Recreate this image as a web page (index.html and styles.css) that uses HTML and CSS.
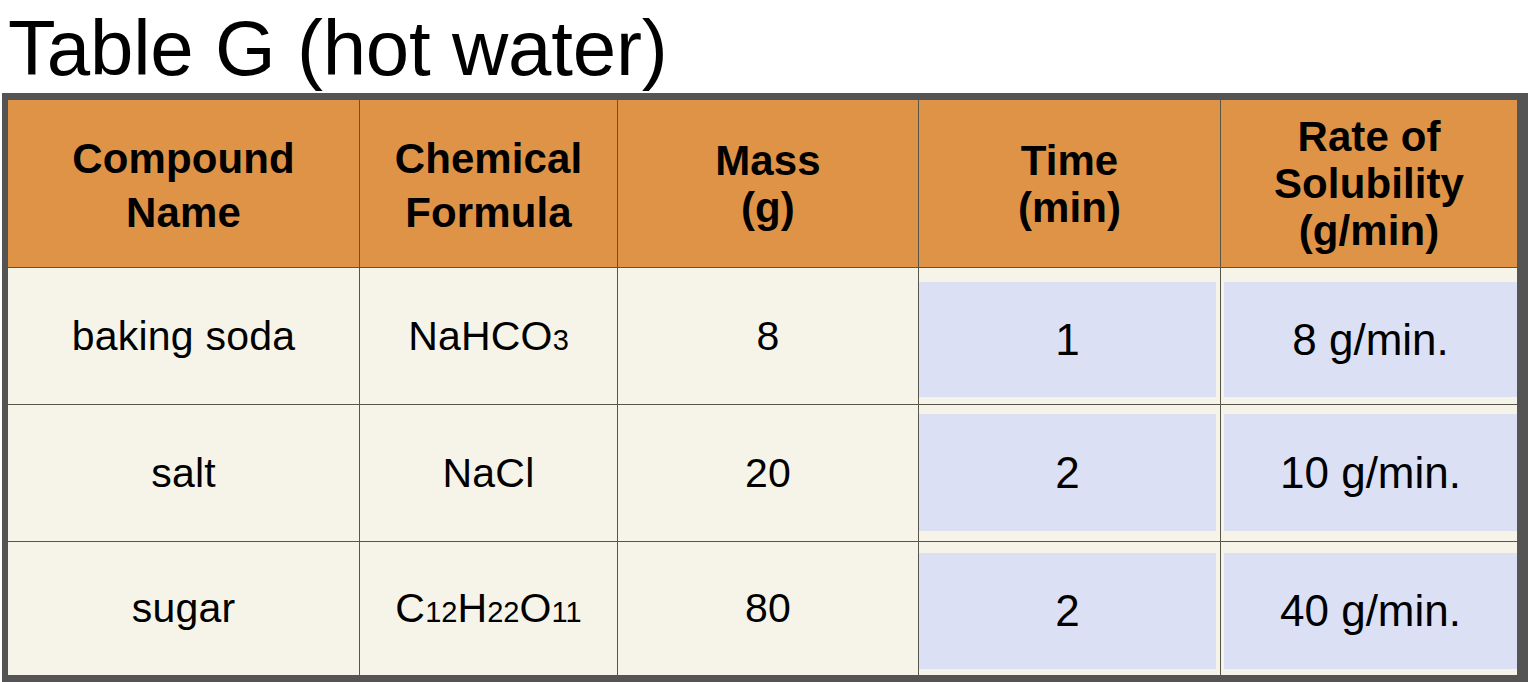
FILE: index.html
```html
<!DOCTYPE html>
<html lang="en">
<head>
<meta charset="utf-8">
<title>Table G (hot water)</title>
<link rel="stylesheet" href="styles.css">
</head>
<body>
<h1 class="title">Table G (hot water)</h1>
<div class="table">
  <div class="grid">
    <div class="cell head lh-wide">Compound<br>Name</div>
    <div class="cell head lh-wide">Chemical<br>Formula</div>
    <div class="cell head">Mass<br>(g)</div>
    <div class="cell head">Time<br>(min)</div>
    <div class="cell head">Rate of<br>Solubility<br>(g/min)</div>

    <div class="cell body">baking soda</div>
    <div class="cell body">NaHCO<span class="sub">3</span></div>
    <div class="cell body">8</div>
    <div class="cell blue-wrap time r1"><div class="blue">1</div></div>
    <div class="cell blue-wrap rate r1"><div class="blue">8 g/min.</div></div>

    <div class="cell body">salt</div>
    <div class="cell body">NaCl</div>
    <div class="cell body">20</div>
    <div class="cell blue-wrap time r2"><div class="blue">2</div></div>
    <div class="cell blue-wrap rate r2"><div class="blue">10 g/min.</div></div>

    <div class="cell body">sugar</div>
    <div class="cell body">C<span class="sub">12</span>H<span class="sub">22</span>O<span class="sub">11</span></div>
    <div class="cell body">80</div>
    <div class="cell blue-wrap time r3"><div class="blue">2</div></div>
    <div class="cell blue-wrap rate r3"><div class="blue">40 g/min.</div></div>
  </div>
</div>
</body>
</html>
```
FILE: styles.css
```css
html, body {
  margin: 0;
  padding: 0;
  background: #ffffff;
}

body {
  font-family: "Liberation Sans", Arial, Helvetica, sans-serif;
  color: #000;
}

.title {
  margin: 0;
  padding: 3px 0 0 8px;
  height: 90px;
  font-size: 78px;
  line-height: 90px;
  font-weight: normal;
  letter-spacing: -0.2px;
  color: #000;
}

.table {
  margin-left: 2px;
  border-style: solid;
  border-color: #545454;
  border-width: 7px 11px 7px 6px;
  background: #5a5549;
}

.grid {
  display: grid;
  grid-template-columns: 351px 257px 300px 301px 296px;
  grid-template-rows: 167px 136px 136px 133px;
  gap: 1px;
  background: #5a5549;
}

.cell {
  display: flex;
  align-items: center;
  justify-content: center;
  text-align: center;
  background: #f6f4e8;
}

.head {
  background: #df9347;
  font-weight: bold;
  font-size: 42px;
  line-height: 47px;
  letter-spacing: 0.1px;
}

.head.lh-wide {
  line-height: 54px;
  padding-top: 4px;
}

.body {
  font-size: 41px;
  letter-spacing: 0.2px;
}

.sub {
  font-size: 29px;
  position: relative;
  top: 4px;
  letter-spacing: 0;
}

.blue-wrap {
  align-items: stretch;
  justify-content: stretch;
}

.blue {
  flex: 1;
  display: flex;
  align-items: center;
  justify-content: center;
  background: #dce0f4;
  font-size: 44px;
}

.time { padding-right: 4px; }
.rate { padding-left: 3px; }

.r1 { padding-top: 14px; padding-bottom: 7px; }
.r2 { padding-top: 9px; padding-bottom: 10px; }
.r3 { padding-top: 11px; padding-bottom: 6px; }
```
